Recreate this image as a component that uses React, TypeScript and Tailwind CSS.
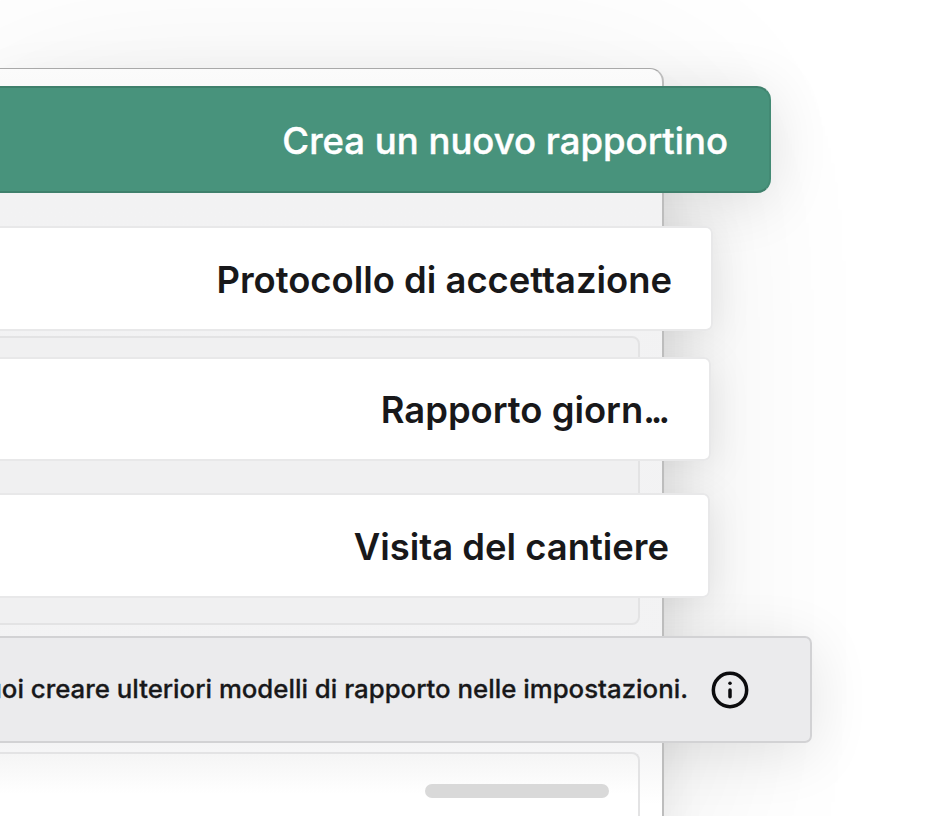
import { Info } from 'lucide-react';

const CARDS = [
  { label: 'Protocollo di accettazione', dots: '', box: 'mt-[33px] h-[105px] w-[713px]', pad: 'pr-[39px]' },
  { label: 'Rapporto giorn', dots: '...', box: 'mt-[26px] h-[104px] w-[711px]', pad: 'pr-[43px]' },
  { label: 'Visita del cantiere', dots: '', box: 'mt-[32px] h-[105px] w-[710px]', pad: 'pr-[39px]' },
];

const GREEN_BOX = 'h-[107px] w-[771px] rounded-r-[14px]';
const BANNER_BOX = 'mt-[38px] h-[107px] w-[812px] rounded-r-[7px]';

export default function App() {
  return (
    <div className="relative h-[816px] w-[948px] overflow-hidden bg-white font-['Inter',sans-serif]">
      {/* Row shadows sit behind the panel, they only show outside of it */}
      <div className="absolute top-[86px] left-0 flex flex-col">
        <div className={`${GREEN_BOX} shadow-[0_8px_60px_rgba(0,0,0,0.12)]`} />
        {CARDS.map((card) => (
          <div key={card.label} className={`${card.box} rounded-r-[7px] shadow-[0_6px_40px_rgba(0,0,0,0.10)]`} />
        ))}
        <div className={`${BANNER_BOX} shadow-[0_10px_60px_rgba(0,0,0,0.11)]`} />
      </div>

      {/* Panel behind the floating rows */}
      <div className="relative ml-[-20px] pt-[68px]">
        <div className="h-[748px] w-[684px] rounded-tr-[14px] border-t border-r-2 border-t-[#a9a9a9] border-r-[#bdbdbd] bg-[linear-gradient(to_bottom,#fbfbfb_0px,#f2f2f3_125px,#f3f3f4_670px,#ffffff_735px)] pt-[267px] shadow-[6px_30px_40px_rgba(0,0,0,0.06),10px_40px_200px_rgba(0,0,0,0.10)]">
          <div className="h-[289px] w-[660px] rounded-r-[8px] border-2 border-[#e3e3e4] bg-[#f0f0f1]" />
          <div className="mt-[127px] h-[100px] w-[660px] rounded-tr-[8px] border-2 border-b-0 border-[#e3e3e4] bg-[linear-gradient(to_bottom,#f5f5f5_0px,#ffffff_40px)] pt-[30px] pr-[29px]">
            <div className="ml-auto h-[14px] w-[184px] rounded-full bg-[#d9d9d9]" />
          </div>
        </div>
      </div>

      {/* Floating rows */}
      <div className="absolute top-[86px] left-0 flex flex-col">
        <div className={`${GREEN_BOX} flex items-center justify-end border-y-2 border-r-2 border-y-[#3f806c] border-r-[#438a74] bg-[#48937c] pt-[3px] pr-[41px]`}>
          <span className="text-[36.5px] font-medium whitespace-nowrap text-white [-webkit-text-stroke:0.4px_white]">
            Crea un nuovo rapportino
          </span>
        </div>

        {CARDS.map((card) => (
          <div
            key={card.label}
            className={`flex items-center justify-end rounded-r-[7px] border-2 border-l-0 border-[#e8e8e9] bg-white pt-[3px] ${card.box} ${card.pad}`}
          >
            <span className="text-[36.4px] font-semibold whitespace-nowrap text-[#18181a]">
              {card.label}
              {card.dots && <span className="tracking-[-4px]">{card.dots}</span>}
            </span>
          </div>
        ))}

        <div className={`${BANNER_BOX} flex items-center justify-end gap-[22px] border-2 border-l-0 border-[#d2d2d4] bg-[#ebebed] pr-[60px]`}>
          <span className="text-[25.8px] font-medium whitespace-nowrap text-[#18181a] [-webkit-text-stroke:0.3px_#18181a]">
            Puoi creare ulteriori modelli di rapporto nelle impostazioni.
          </span>
          <Info size={40} strokeWidth={2.1} className="shrink-0 text-[#0c0c0e]" />
        </div>
      </div>
    </div>
  );
}
